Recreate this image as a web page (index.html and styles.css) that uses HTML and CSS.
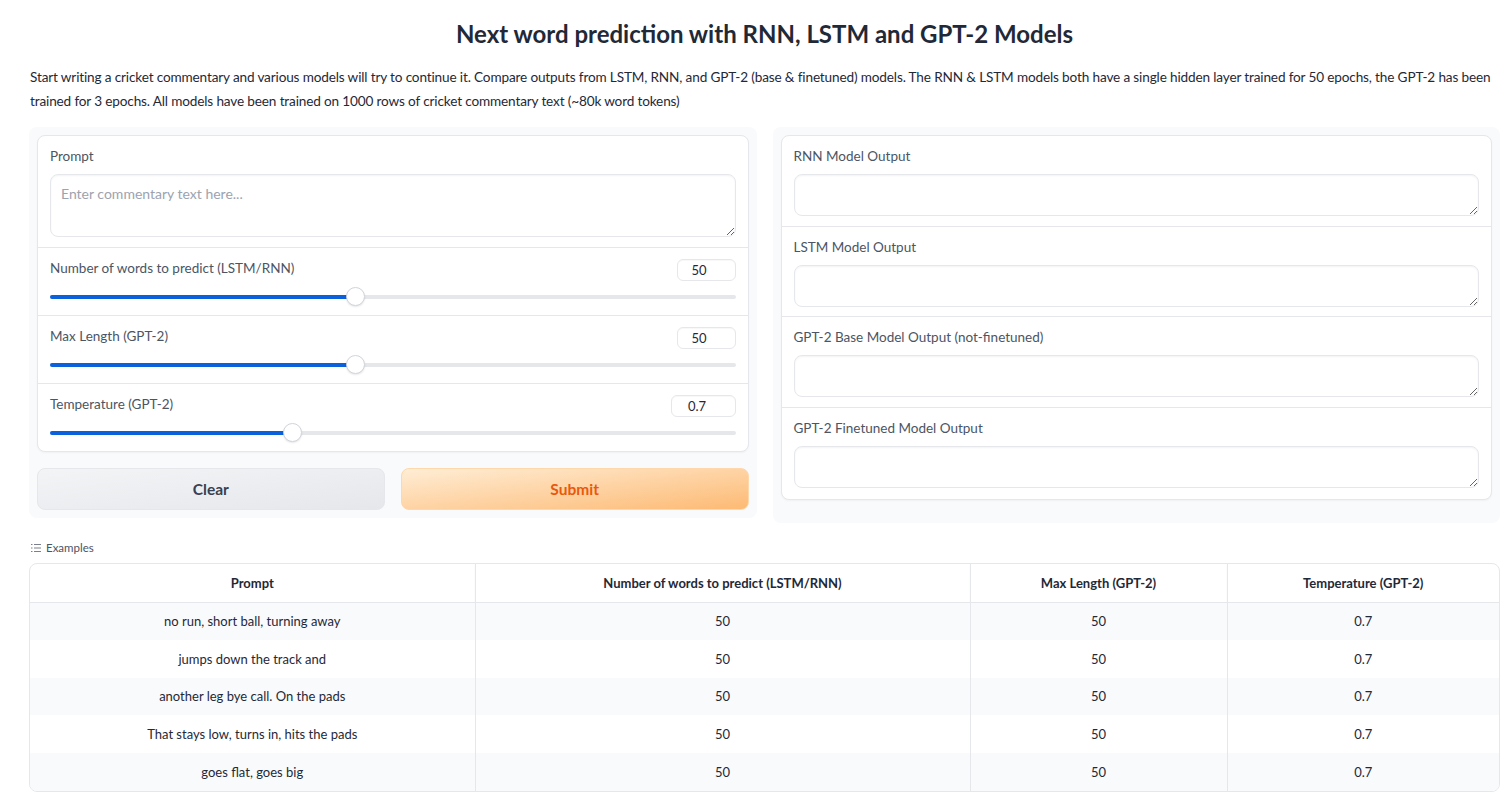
FILE: index.html
```html
<!DOCTYPE html>
<html>
<head>
<meta charset="utf-8">
<link rel="stylesheet" href="styles.css">
</head>
<body>
<div class="app">
  <h1 class="title">Next word prediction with RNN, LSTM and GPT-2 Models</h1>
  <p class="desc">Start writing a cricket commentary and various models will try to continue it. Compare outputs from LSTM, RNN, and GPT-2 (base &amp; finetuned) models. The RNN &amp; LSTM models both have a single hidden layer trained for 50 epochs, the GPT-2 has been trained for 3 epochs. All models have been trained on 1000 rows of cricket commentary text (~80k word tokens)</p>

  <div class="row">
    <div class="panel">
      <div class="form">
        <div class="block">
          <div class="label">Prompt</div>
          <textarea class="ta ta-prompt" placeholder="Enter commentary text here..."></textarea>
        </div>
        <div class="block slider-block">
          <div class="slider-head">
            <span class="label">Number of words to predict (LSTM/RNN)</span>
            <span class="num">50</span>
          </div>
          <div class="track"><div class="fill" style="width:44.5%"></div><div class="thumb" style="left:44.5%"></div></div>
        </div>
        <div class="block slider-block">
          <div class="slider-head">
            <span class="label">Max Length (GPT-2)</span>
            <span class="num">50</span>
          </div>
          <div class="track"><div class="fill" style="width:44.5%"></div><div class="thumb" style="left:44.5%"></div></div>
        </div>
        <div class="block slider-block last">
          <div class="slider-head">
            <span class="label">Temperature (GPT-2)</span>
            <span class="num wide">0.7</span>
          </div>
          <div class="track"><div class="fill" style="width:35.3%"></div><div class="thumb" style="left:35.3%"></div></div>
        </div>
      </div>
      <div class="buttons">
        <button class="btn btn-clear">Clear</button>
        <button class="btn btn-submit">Submit</button>
      </div>
    </div>

    <div class="panel right">
      <div class="form">
        <div class="block out">
          <div class="label">RNN Model Output</div>
          <textarea class="ta ta-out"></textarea>
        </div>
        <div class="block out">
          <div class="label">LSTM Model Output</div>
          <textarea class="ta ta-out"></textarea>
        </div>
        <div class="block out">
          <div class="label">GPT-2 Base Model Output (not-finetuned)</div>
          <textarea class="ta ta-out"></textarea>
        </div>
        <div class="block out last">
          <div class="label">GPT-2 Finetuned Model Output</div>
          <textarea class="ta ta-out"></textarea>
        </div>
      </div>
    </div>
  </div>

  <div class="examples-label">
    <svg width="10" height="10" viewBox="0 0 10 10" class="ex-icon"><g stroke="#6b7280" stroke-width="0.9"><line x1="0" y1="1.5" x2="1.5" y2="1.5"/><line x1="3" y1="1.5" x2="10" y2="1.5"/><line x1="0" y1="5" x2="1.5" y2="5"/><line x1="3" y1="5" x2="10" y2="5"/><line x1="0" y1="8.5" x2="1.5" y2="8.5"/><line x1="3" y1="8.5" x2="10" y2="8.5"/></g></svg>
    <span>Examples</span>
  </div>

  <div class="table-wrap">
    <table class="ex-table">
      <thead>
        <tr><th class="c1">Prompt</th><th class="c2">Number of words to predict (LSTM/RNN)</th><th class="c3">Max Length (GPT-2)</th><th class="c4">Temperature (GPT-2)</th></tr>
      </thead>
      <tbody>
        <tr><td>no run, short ball, turning away</td><td>50</td><td>50</td><td>0.7</td></tr>
        <tr><td>jumps down the track and</td><td>50</td><td>50</td><td>0.7</td></tr>
        <tr><td>another leg bye call. On the pads</td><td>50</td><td>50</td><td>0.7</td></tr>
        <tr><td>That stays low, turns in, hits the pads</td><td>50</td><td>50</td><td>0.7</td></tr>
        <tr><td>goes flat, goes big</td><td>50</td><td>50</td><td>0.7</td></tr>
      </tbody>
    </table>
  </div>
</div>
</body>
</html>
```

FILE: styles.css
```css
* { box-sizing: border-box; }
html, body { margin: 0; padding: 0; background: #ffffff; }
body {
  font-family: "Source Sans Pro", Lato, "Noto Sans", sans-serif;
  color: #1f2937;
}
.app {
  padding: 0 7px 0 29px;
}
.title {
  margin: 0;
  padding-top: 19px;
  height: 54px;
  text-align: center;
  font-size: 24px;
  line-height: 30px;
  font-weight: 700;
  color: #1f2937;
}
.desc {
  margin: 11px 0 0 1px;
  font-size: 13.6px;
  line-height: 24px;
  color: #1f2937;
  letter-spacing: -0.15px;
}
.row {
  display: flex;
  gap: 16px;
  margin-top: 14px;
  align-items: flex-start;
}
.panel {
  flex: 1 1 0;
  background: #f9fafb;
  border-radius: 8px;
  padding: 8px;
}
.panel.right {
  padding-bottom: 23px;
}
.form {
  background: #ffffff;
  border: 1px solid #e5e7eb;
  border-radius: 8px;
  box-shadow: 0 1px 2px rgba(0,0,0,0.04);
}
.block {
  padding: 11px 12px 10px 12px;
  border-bottom: 1px solid #e5e7eb;
}
.block.last { border-bottom: none; }
.label {
  display: block;
  font-size: 13.5px;
  line-height: 18px;
  color: #4b5563;
}
.ta {
  display: block;
  width: 100%;
  margin-top: 9px;
  border: 1px solid #e5e7eb;
  border-radius: 8px;
  box-shadow: inset 0 1px 2px rgba(0,0,0,0.05);
  font-family: inherit;
  font-size: 14px;
  padding: 10px;
  color: #1f2937;
  background: #fff;
  resize: vertical;
  outline: none;
}
.ta::placeholder { color: #9ca3af; }
.ta-prompt { height: 63px; resize: vertical; }
.ta-out { height: 42px; }
.block.out { height: 90.5px; }
.block.out.last { height: 91px; }

.slider-block { height: 68px; padding-top: 11px; }
.slider-block.last { height: 67px; }
.slider-head {
  display: flex;
  justify-content: space-between;
  align-items: flex-start;
}
.slider-head .label { margin-top: 0; }
.num {
  width: 59px;
  height: 22px;
  border: 1px solid #e5e7eb;
  border-radius: 6px;
  font-size: 13px;
  line-height: 20px;
  text-align: center;
  padding-right: 14px;
  color: #1f2937;
  box-shadow: inset 0 1px 1px rgba(0,0,0,0.03);
}
.num.wide { width: 65px; padding-right: 12px; }
.track {
  position: relative;
  height: 4px;
  margin-top: 14px;
  background: #e5e7eb;
  border-radius: 2px;
}
.fill {
  height: 4px;
  background: #0b61db;
  border-radius: 2px;
}
.thumb {
  position: absolute;
  top: -8px;
  width: 19px;
  height: 19px;
  margin-left: -9px;
  border-radius: 50%;
  background: #ffffff;
  border: 1px solid #d1d5db;
  box-shadow: 0 1px 2px rgba(0,0,0,0.1);
}
.buttons {
  display: flex;
  gap: 16px;
  margin-top: 16px;
}
.btn {
  flex: 1 1 0;
  height: 42px;
  border-radius: 8px;
  font-family: inherit;
  font-size: 15.5px;
  font-weight: 700;
  cursor: pointer;
}
.btn-clear {
  background: linear-gradient(to bottom right, #f3f4f6, #e5e7eb);
  border: 1px solid #e5e7eb;
  color: #374151;
}
.btn-submit {
  background: linear-gradient(to bottom right, #ffedd5, #fdba74);
  border: 1px solid #fed7aa;
  color: #ea580c;
}
.examples-label {
  display: flex;
  align-items: center;
  gap: 5px;
  margin-top: 17px;
  margin-left: 2px;
  font-size: 11.5px;
  color: #4b5563;
  height: 16px;
}
.table-wrap {
  margin-top: 7px;
  border: 1px solid #e5e7eb;
  border-radius: 8px;
  overflow: hidden;
  margin-right: 0;
}
.ex-table {
  width: 100%;
  border-collapse: collapse;
  font-size: 13px;
  color: #1f2937;
}
.ex-table th {
  height: 38.5px;
  font-weight: 700;
  border-bottom: 1px solid #e5e7eb;
  box-shadow: 0 1px 2px rgba(0,0,0,0.04);
}
.ex-table th, .ex-table td {
  text-align: center;
  border-left: 1px solid #e5e7eb;
  padding: 0 8px;
}
.ex-table th:first-child, .ex-table td:first-child { border-left: none; }
.ex-table td { height: 37.8px; }
.ex-table tbody tr:nth-child(odd) { background: #f9fafb; }
.c1 { width: 445px; }
.c2 { width: 495px; }
.c3 { width: 257px; }
.c4 { width: auto; }
```
